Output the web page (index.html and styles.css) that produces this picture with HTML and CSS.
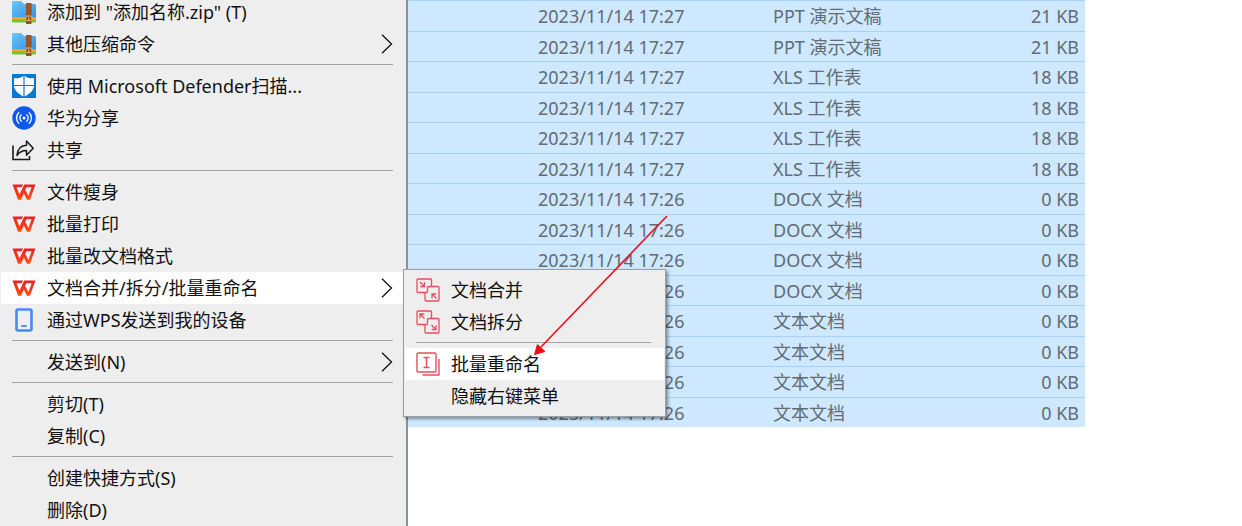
FILE: index.html
```html
<!DOCTYPE html>
<html lang="zh-CN">
<head>
    <meta charset="UTF-8">
    <meta name="viewport" content="width=device-width, initial-scale=1.0">
    <title>批量重命名</title>
    <link rel="stylesheet" href="styles.css">
</head>
<body>
    <svg class="defs" aria-hidden="true">
        <linearGradient id="folderBlue" x1="0" y1="0" x2="1" y2="1">
            <stop offset="0" stop-color="#6cc6f7"/>
            <stop offset="1" stop-color="#3292e6"/>
        </linearGradient>
        <linearGradient id="wpsRed" x1="0" y1="0" x2="0" y2="1">
            <stop offset="0" stop-color="#e5202b"/>
            <stop offset="1" stop-color="#ff5012"/>
        </linearGradient>
        <symbol id="zip" viewBox="0 0 24 24">
            <path d="M0 18h24v3.500a1 1 0 0 1-1 1H1a1 1 0 0 1-1-1z" fill="#7cbf32"/>
            <path d="M0 16h24v3.500H0z" fill="#f4a42c"/>
            <path d="M0 2.500a1.500 1.500 0 0 1 1.500-1.500H9l3 3h10.500a1.500 1.500 0 0 1 1.500 1.500V17H0z" fill="url(#folderBlue)"/>
            <path d="M14 3h5.500v21H14z" fill="#925127"/>
            <path d="M16.800 4v12" stroke="#b87238" stroke-width="1" stroke-dasharray="1 1"/>
            <rect x="13.800" y="16" width="6" height="4.500" rx="1" fill="#8a4d22" stroke="#e8b468" stroke-width="1"/>
            <path d="M16.800 17v3" stroke="#f0bd62" stroke-width="1"/>
        </symbol>
        <symbol id="defender" viewBox="0 0 24 24">
            <path d="M0 0h24v24H0z" fill="#0a78d0"/>
            <path d="M12 1.500C14.500 3.700 18 4.500 22 4.300V11c0 5.500-4.500 9-10 11.800C6.500 20 2 16.500 2 11V4.300C6 4.500 9.500 3.700 12 1.500z" fill="#fff"/>
            <path d="M12 1v22M1.500 11.500h21" stroke="#0a78d0" stroke-width="1.200"/>
        </symbol>
        <symbol id="huawei" viewBox="0 0 24 24">
            <circle cx="12" cy="12" r="11.700" fill="#0f58ee"/>
            <circle cx="12" cy="12" r="1.500" fill="#fff"/>
            <path d="M9.300 8.800a4.200 4.200 0 0 0 0 6.400M14.700 8.800a4.200 4.200 0 0 1 0 6.400M6.700 6.800a7.400 7.400 0 0 0 0 10.400M17.300 6.800a7.400 7.400 0 0 1 0 10.400" fill="none" stroke="#fff" stroke-width="1.300" stroke-linecap="round"/>
        </symbol>
        <symbol id="share" viewBox="0 0 24 24">
            <path d="M1 7.500v14h16.500v-3.500" fill="none" stroke="#1a1a1a" stroke-width="1.600"/>
            <path d="M5 17.500C5.500 11 9 7.500 14.500 7.300V3l6.700 7.300-6.700 7v-4.700c-4-.1-6.800 1.200-9.500 4.900z" fill="none" stroke="#1a1a1a" stroke-width="1.500" stroke-linejoin="round"/>
        </symbol>
        <symbol id="wps" viewBox="0 0 24 24">
            <path d="M.500 4.500H11L9.700 7.300H4.500L7.500 14.500 12.200 4.500H23.500L18 19.700H14.900L11.900 13.500 9 19.700H6z M14.300 7.300 13.200 10 16.400 16 19.700 7.300z" fill="url(#wpsRed)" fill-rule="evenodd"/>
        </symbol>
        <symbol id="phone" viewBox="0 0 24 24">
            <rect x="4.500" y="1.500" width="15" height="21" rx="1.500" fill="none" stroke="#438bf4" stroke-width="2.600"/>
            <path d="M9.200 18h5.600" stroke="#438bf4" stroke-width="1.800"/>
        </symbol>
        <symbol id="chevron" viewBox="0 0 12 20">
            <path d="M1 .800 10.500 10 1 19.200" fill="none" stroke="#111" stroke-width="1.300"/>
        </symbol>
        <symbol id="pages" viewBox="0 0 24 24">
            <path d="M9 14.500H2a1 1 0 0 1-1-1V2a1 1 0 0 1 1-1h12.500a1 1 0 0 1 1 1v6.500H22a1 1 0 0 1 1 1V22a1 1 0 0 1-1 1H10a1 1 0 0 1-1-1V14.500h1.500a1 1 0 0 0 1-1V9.500a1 1 0 0 1 1-1h3"/>
        </symbol>
        <symbol id="merge" viewBox="0 0 24 24">
            <g fill="none" stroke="#e5505a" stroke-width="1.300">
                <use href="#pages"/>
                <path d="M4 4l4.500 4.500M8.500 4.200v4.300H4.200M20.500 20.500 16 16M16 20.300V16h4.300"/>
            </g>
        </symbol>
        <symbol id="split" viewBox="0 0 24 24">
            <g fill="none" stroke="#e5505a" stroke-width="1.300">
                <use href="#pages"/>
                <path d="M4 4l4.500 4.500M4 8.300V4h4.300M20 19.500 15.500 15M20 15.200v4.300h-4.300"/>
            </g>
        </symbol>
        <symbol id="rename" viewBox="0 0 24 24">
            <g fill="none" stroke="#e5505a" stroke-width="1.400">
                <rect x="1" y="1" width="19" height="19" rx="1"/>
                <path d="M23 7v16H6.500M7.500 5.500h6M7.500 15.500h6M10.500 5.500v10"/>
            </g>
        </symbol>
    </svg>

    <table class="files">
        <tbody>
            <tr><td class="name"></td><td class="date">2023/11/14 17:27</td><td class="type">PPT 演示文稿</td><td class="size">21 KB</td></tr>
            <tr><td class="name"></td><td class="date">2023/11/14 17:27</td><td class="type">PPT 演示文稿</td><td class="size">21 KB</td></tr>
            <tr><td class="name"></td><td class="date">2023/11/14 17:27</td><td class="type">XLS 工作表</td><td class="size">18 KB</td></tr>
            <tr><td class="name"></td><td class="date">2023/11/14 17:27</td><td class="type">XLS 工作表</td><td class="size">18 KB</td></tr>
            <tr><td class="name"></td><td class="date">2023/11/14 17:27</td><td class="type">XLS 工作表</td><td class="size">18 KB</td></tr>
            <tr><td class="name"></td><td class="date">2023/11/14 17:27</td><td class="type">XLS 工作表</td><td class="size">18 KB</td></tr>
            <tr><td class="name"></td><td class="date">2023/11/14 17:26</td><td class="type">DOCX 文档</td><td class="size">0 KB</td></tr>
            <tr><td class="name"></td><td class="date">2023/11/14 17:26</td><td class="type">DOCX 文档</td><td class="size">0 KB</td></tr>
            <tr><td class="name"></td><td class="date">2023/11/14 17:26</td><td class="type">DOCX 文档</td><td class="size">0 KB</td></tr>
            <tr><td class="name"></td><td class="date">2023/11/14 17:26</td><td class="type">DOCX 文档</td><td class="size">0 KB</td></tr>
            <tr><td class="name"></td><td class="date">2023/11/14 17:26</td><td class="type">文本文档</td><td class="size">0 KB</td></tr>
            <tr><td class="name"></td><td class="date">2023/11/14 17:26</td><td class="type">文本文档</td><td class="size">0 KB</td></tr>
            <tr><td class="name"></td><td class="date">2023/11/14 17:26</td><td class="type">文本文档</td><td class="size">0 KB</td></tr>
            <tr><td class="name"></td><td class="date">2023/11/14 17:26</td><td class="type">文本文档</td><td class="size">0 KB</td></tr>
        </tbody>
    </table>

    <ul class="menu">
        <li><button type="button" class="item"><svg class="icon"><use href="#zip"/></svg>添加到 "添加名称.zip" (T)</button></li>
        <li><button type="button" class="item"><svg class="icon"><use href="#zip"/></svg>其他压缩命令<svg class="chevron"><use href="#chevron"/></svg></button></li>
        <li class="separator"></li>
        <li><button type="button" class="item"><svg class="icon"><use href="#defender"/></svg>使用 Microsoft Defender扫描...</button></li>
        <li><button type="button" class="item"><svg class="icon"><use href="#huawei"/></svg>华为分享</button></li>
        <li><button type="button" class="item"><svg class="icon"><use href="#share"/></svg>共享</button></li>
        <li class="separator"></li>
        <li><button type="button" class="item"><svg class="icon"><use href="#wps"/></svg>文件瘦身</button></li>
        <li><button type="button" class="item"><svg class="icon"><use href="#wps"/></svg>批量打印</button></li>
        <li><button type="button" class="item"><svg class="icon"><use href="#wps"/></svg>批量改文档格式</button></li>
        <li class="has-submenu">
            <button type="button" class="item active"><svg class="icon"><use href="#wps"/></svg>文档合并/拆分/批量重命名<svg class="chevron"><use href="#chevron"/></svg></button>
            <ul class="submenu">
                <li><button type="button" class="item"><svg class="icon"><use href="#merge"/></svg>文档合并</button></li>
                <li><button type="button" class="item"><svg class="icon"><use href="#split"/></svg>文档拆分</button></li>
                <li class="separator"></li>
                <li><button type="button" class="item active"><svg class="icon"><use href="#rename"/></svg>批量重命名</button></li>
                <li><button type="button" class="item"><span class="icon"></span>隐藏右键菜单</button></li>
            </ul>
        </li>
        <li><button type="button" class="item"><svg class="icon"><use href="#phone"/></svg>通过WPS发送到我的设备</button></li>
        <li class="separator"></li>
        <li><button type="button" class="item"><span class="icon"></span>发送到(N)<svg class="chevron"><use href="#chevron"/></svg></button></li>
        <li class="separator"></li>
        <li><button type="button" class="item"><span class="icon"></span>剪切(T)</button></li>
        <li><button type="button" class="item"><span class="icon"></span>复制(C)</button></li>
        <li class="separator"></li>
        <li><button type="button" class="item"><span class="icon"></span>创建快捷方式(S)</button></li>
        <li><button type="button" class="item"><span class="icon"></span>删除(D)</button></li>
    </ul>

    <svg class="pointer" viewBox="0 0 136 144" aria-hidden="true">
        <path d="M134 2 8 133" stroke="#e8101c" stroke-width="1.600"/>
        <path d="M1.500 140.500 4.500 130.500 12 137.500z" fill="#f00b12" stroke="#f00b12"/>
    </svg>
</body>
</html>
```
FILE: styles.css
```css
* {
    box-sizing: border-box;
}
body {
    margin: 0;
    height: 100vh;
    overflow: hidden;
    position: relative;
    background: #fff;
    font-family: "Noto Sans", "Noto Sans CJK SC", sans-serif;
    font-size: 18px;
    color: #111;
}
ul {
    list-style: none;
    margin: 0;
    padding: 0;
}
.defs {
    position: absolute;
    width: 0;
    height: 0;
}

/* file list */
.files {
    border-collapse: separate;
    border-spacing: 0;
    table-layout: fixed;
    width: 1085px;
    background: #cde8ff;
    color: #636b73;
    line-height: 24px;
}
.files tr {
    height: 30px;
}
.files tr:nth-child(odd) {
    height: 31px;
}
.files td {
    padding: 0;
    border-top: 1px solid #a5d2f6;
    white-space: nowrap;
}
.files .name {
    width: 538px;
}
.files .date {
    width: 235px;
}
.files .size {
    padding-right: 6px;
    text-align: right;
}

/* context menu */
.menu {
    position: absolute;
    top: -4px;
    left: 0;
    width: 408px;
    padding-left: 1px;
    background: #eee;
    border-right: 2px solid #8c9196;
}
.item {
    display: flex;
    align-items: center;
    gap: 11px;
    width: 100%;
    height: 32px;
    padding: 0 13px 0 11px;
    border: none;
    background: none;
    color: inherit;
    font: inherit;
    line-height: 24px;
    text-align: left;
    white-space: nowrap;
}
.item:hover,
.item.active {
    background: #fff;
}
.icon {
    flex: none;
    width: 24px;
    height: 24px;
}
.chevron {
    width: 12px;
    height: 20px;
    margin-left: auto;
}
.separator {
    height: 1px;
    margin: 4px 13px 5px 11px;
    background: #a3a3a3;
}
.has-submenu {
    position: relative;
}
.submenu {
    position: absolute;
    top: -3px;
    left: 402px;
    width: 263px;
    padding: 4px 1px;
    background: #eee;
    border: 1px solid #9a9fa4;
    box-shadow: 2px 2px 3px rgba(0, 0, 0, 0.4);
}

/* arrow over the submenu */
.pointer {
    position: absolute;
    top: 214px;
    left: 533px;
    width: 136px;
    height: 144px;
}
```
